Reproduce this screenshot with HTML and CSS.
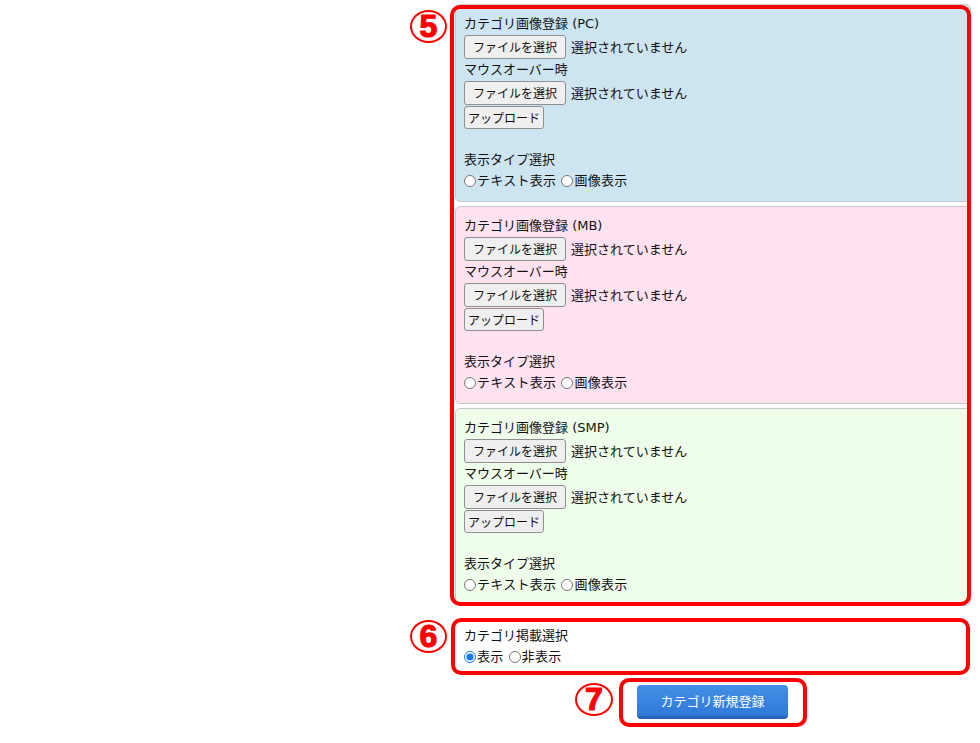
FILE: index.html
```html
<!DOCTYPE html>
<html lang="ja">
<head>
<meta charset="utf-8">
<title>カテゴリ新規登録</title>
<link rel="stylesheet" href="styles.css">
</head>
<body>
<main class="page">
  <section class="row row5">
    <div class="marker">5</div>
    <div class="group">
      <div class="panel pc">
        <div class="line">カテゴリ画像登録 (PC)</div>
        <div class="filerow"><button class="btn">ファイルを選択</button><span>選択されていません</span></div>
        <div class="line sub">マウスオーバー時</div>
        <div class="filerow"><button class="btn">ファイルを選択</button><span>選択されていません</span></div>
        <div class="uprow"><button class="btn up">アップロード</button></div>
        <div class="blank"></div>
        <div class="line">表示タイプ選択</div>
        <div class="radios"><label><input type="radio" name="t1">テキスト表示</label><label><input type="radio" name="t1">画像表示</label></div>
      </div>
      <div class="panel mb">
        <div class="line">カテゴリ画像登録 (MB)</div>
        <div class="filerow"><button class="btn">ファイルを選択</button><span>選択されていません</span></div>
        <div class="line sub">マウスオーバー時</div>
        <div class="filerow"><button class="btn">ファイルを選択</button><span>選択されていません</span></div>
        <div class="uprow"><button class="btn up">アップロード</button></div>
        <div class="blank"></div>
        <div class="line">表示タイプ選択</div>
        <div class="radios"><label><input type="radio" name="t2">テキスト表示</label><label><input type="radio" name="t2">画像表示</label></div>
      </div>
      <div class="panel smp">
        <div class="line">カテゴリ画像登録 (SMP)</div>
        <div class="filerow"><button class="btn">ファイルを選択</button><span>選択されていません</span></div>
        <div class="line sub">マウスオーバー時</div>
        <div class="filerow"><button class="btn">ファイルを選択</button><span>選択されていません</span></div>
        <div class="uprow"><button class="btn up">アップロード</button></div>
        <div class="blank"></div>
        <div class="line">表示タイプ選択</div>
        <div class="radios"><label><input type="radio" name="t3">テキスト表示</label><label><input type="radio" name="t3">画像表示</label></div>
      </div>
    </div>
  </section>
  <section class="row row6">
    <div class="marker">6</div>
    <div class="box6">
      <div class="line">カテゴリ掲載選択</div>
      <div class="radios"><label><input type="radio" name="pub" checked>表示</label><label><input type="radio" name="pub">非表示</label></div>
    </div>
  </section>
  <section class="row row7">
    <div class="marker">7</div>
    <div class="box7">
      <button class="submit">カテゴリ新規登録</button>
    </div>
  </section>
</main>
</body>
</html>
```

FILE: styles.css
```css
html, body {
  margin: 0;
  background: #fff;
}
body {
  font-family: "DejaVu Sans", "Noto Sans CJK JP", sans-serif;
  font-size: 13px;
  color: #111;
}
.page {
  padding: 4px 0 0 410px;
}
.row {
  display: flex;
  align-items: flex-start;
}
.marker {
  box-sizing: border-box;
  width: 37px;
  height: 33px;
  border: 2px solid #f00;
  border-radius: 50%;
  background: #fff;
  color: #f00;
  font-family: "Liberation Sans", Arial, sans-serif;
  font-weight: bold;
  font-size: 32px;
  line-height: 29px;
  text-align: center;
  -webkit-text-stroke: 1.2px #f00;
  flex: none;
}
.row5 .marker {
  margin: 6px 8px 0 0;
}
.group {
  position: relative;
  width: 516px;
}
.group::after {
  content: "";
  position: absolute;
  top: 1px;
  left: -5px;
  right: 0;
  bottom: 0;
  border: 4px solid #f00;
  border-radius: 10px;
  pointer-events: none;
}
.panel {
  border: 1px solid #c8c8c8;
  border-radius: 5px;
  padding: 9px 8px 10px 8px;
  margin-bottom: 4px;
}
.panel:last-child {
  margin-bottom: 0;
}
.pc { background: #cde5f1; }
.mb { background: #ffe2f0; }
.smp { background: #effdeb; }
.line {
  line-height: 20px;
  height: 20px;
}
.line.sub {
  line-height: 21px;
  height: 21px;
}
.filerow {
  display: flex;
  align-items: center;
  gap: 5px;
  height: 25px;
}
.uprow {
  display: flex;
  align-items: center;
  height: 25px;
}
.blank {
  height: 20px;
}
.btn {
  box-sizing: border-box;
  height: 24px;
  margin: 0;
  padding: 0 8px;
  font-family: "Noto Sans CJK JP", sans-serif;
  font-size: 12px;
  color: #111;
  background: #efefef;
  border: 1px solid #8f8f8f;
  border-radius: 3px;
}
.btn.up {
  height: 23px;
  padding: 0 3px;
}
.radios {
  display: flex;
  gap: 5px;
  line-height: 21px;
  height: 21px;
}
.radios label {
  display: inline-flex;
  align-items: center;
  gap: 1px;
  letter-spacing: 0.3px;
}
.radios input {
  width: 12px;
  height: 12px;
  margin: 0;
  accent-color: #1a7cf2;
}
.row6 {
  margin-top: 12px;
}
.row6 .marker {
  margin: 2px 4px 0 0;
}
.box6 {
  box-sizing: border-box;
  width: 519px;
  height: 57px;
  border: 4px solid #f00;
  border-radius: 10px;
  padding: 4px 9px 5px 9px;
}
.row7 {
  margin-top: 3px;
}
.row7 .marker {
  width: 38px;
  margin: 5px 6px 0 165px;
}
.box7 {
  border: 4px solid #f00;
  border-radius: 10px;
  padding: 3px 15px 4px 14px;
}
.submit {
  box-sizing: border-box;
  display: block;
  width: 151px;
  height: 34px;
  margin: 0;
  padding: 0;
  border: none;
  border-bottom: 3px solid #2563bd;
  border-radius: 4px;
  background: linear-gradient(#4390e6, #3079d8);
  color: #fff;
  font-family: "Noto Sans CJK JP", sans-serif;
  font-size: 13px;
  line-height: 31px;
}
```
